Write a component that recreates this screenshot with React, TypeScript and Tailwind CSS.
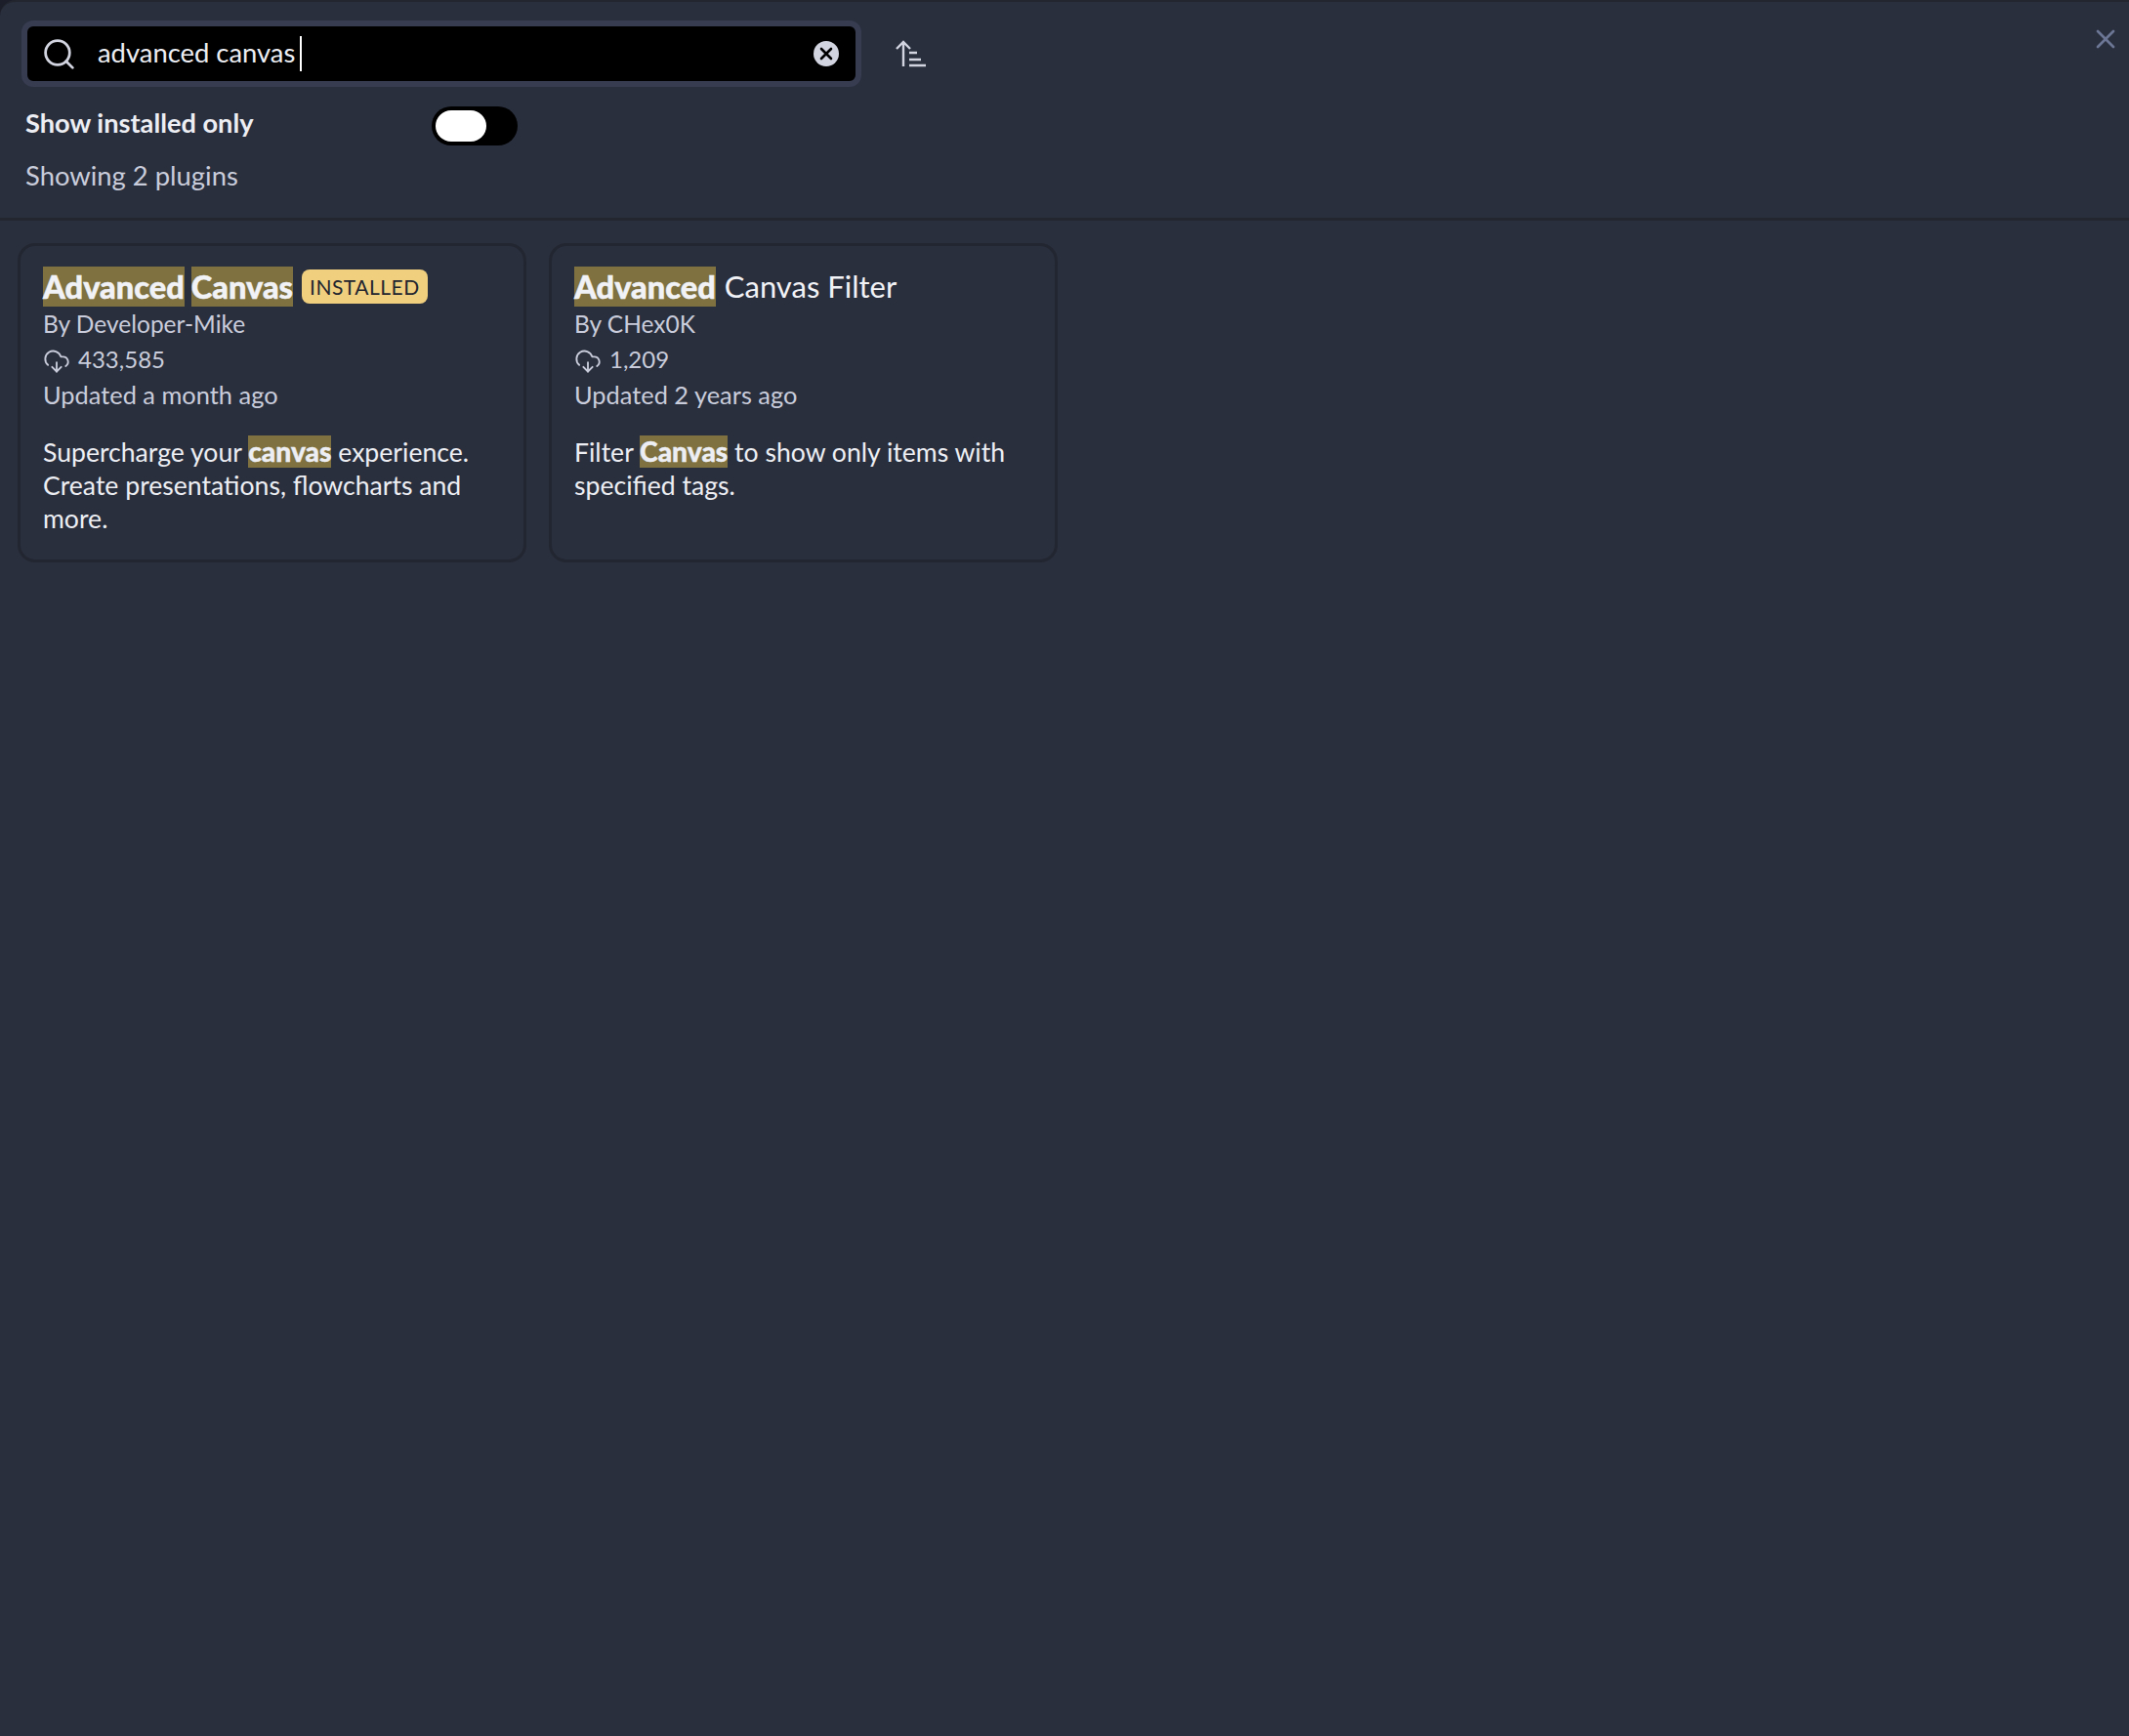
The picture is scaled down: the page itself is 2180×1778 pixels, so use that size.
import { CloudDownload, Search, X } from "lucide-react";
import { ReactNode } from "react";

const Mark = ({ children, big }: { children: ReactNode; big?: boolean }) => (
  <span
    className={
      big
        ? "inline-block bg-[#7f7140] text-[32.6px] font-black leading-[41px] [-webkit-text-stroke:0.5px_#f1f2f6]"
        : "inline-block bg-[#7f7140] text-[28.2px] font-black leading-[33px] [-webkit-text-stroke:0.4px_#eceef3]"
    }
  >
    {children}
  </span>
);

function SortIcon() {
  return (
    <svg width="32" height="30" viewBox="0 0 32 30" fill="none" stroke="#d2d5e0" strokeWidth="2.4">
      <path d="M9 28V3M2 10l7-7 7 7" />
      <path d="M15 14h8M15 21h12M15 27h17" />
    </svg>
  );
}

function ClearIcon() {
  return (
    <svg width="26" height="26" viewBox="0 0 26 26">
      <circle cx="13" cy="13" r="13" fill="#d2d5e0" />
      <path d="M8 8l10 10M18 8L8 18" stroke="#000" strokeWidth="2.6" strokeLinecap="round" />
    </svg>
  );
}

interface CardProps {
  title: ReactNode;
  author: string;
  downloads: string;
  updated: string;
  description: ReactNode;
}

function PluginCard({ title, author, downloads, updated, description }: CardProps) {
  return (
    <div className="w-[521px] h-[327px] rounded-[18px] border-[3px] border-[#222630] bg-[#2a2f3e] pl-[23px] pr-[20px] pt-[21px]">
      <div className="flex items-center h-[41px] text-[31px] leading-[41px] text-[#f1f2f6]">{title}</div>
      <div className="text-[24.5px] leading-[36px] text-[#c9cddb]">By {author}</div>
      <div className="flex items-center h-[36px] text-[24px] text-[#c9cddb]">
        <CloudDownload size={28} strokeWidth={1.6} className="mr-[8px] mt-[3px]" />
        {downloads}
      </div>
      <div className="text-[25.4px] leading-[36px] text-[#c9cddb]">{updated}</div>
      <p className="mt-[24px] text-[26.6px] leading-[34px] text-[#eceef3]">{description}</p>
    </div>
  );
}

export default function App() {
  return (
    <div className="relative min-h-[1778px] w-[2180px] bg-[#1c1f29] font-['Lato',sans-serif]">
      <div className="relative min-h-[1778px] rounded-tl-[16px] border-t-[2px] border-[#23262f] bg-[#2a2f3e]">
        <div className="h-[224px] border-b-[3px] border-[#23262f] pl-[22px] pt-[19px]">
          <div className="flex items-center">
            <div className="h-[68px] w-[860px] rounded-[12px] border-[6px] border-[#373c51] bg-black">
              <div className="flex h-full items-center pl-[14px] pr-[17px] text-[27.4px] text-[#eceef3]">
                <Search size={37} strokeWidth={1.8} className="mr-[21px] text-[#d2d5e0]" />
                <span className="mb-[2px]">advanced canvas</span>
                <span className="ml-[5px] h-[36px] w-[2px] bg-white" />
                <span className="ml-auto flex">
                  <ClearIcon />
                </span>
              </div>
            </div>
            <div className="ml-[34px] flex">
              <SortIcon />
            </div>
          </div>
          <div className="mt-[19px] flex h-[42px] items-center pl-[4px]">
            <span className="mb-[5px] w-[416px] text-[27.2px] font-bold text-[#eceef3]">Show installed only</span>
            <div className="h-[40px] w-[88px] rounded-full bg-black p-[4px]">
              <div className="h-[32px] w-[52px] rounded-full bg-white" />
            </div>
          </div>
          <div className="mt-[12px] pl-[4px] text-[27.4px] leading-[36px] text-[#c9cddb]">Showing 2 plugins</div>
        </div>
        <div className="flex gap-[23px] pl-[18px] pt-[23px]">
          <PluginCard
            title={
              <>
                <Mark big>Advanced</Mark>
                <span className="w-[7px]" />
                <Mark big>Canvas</Mark>
                <span className="ml-[9px] flex h-[35px] items-center rounded-[8px] bg-[#f0cf7f] px-[8px] text-[21px] tracking-[0.5px] text-[#23262f]">
                  INSTALLED
                </span>
              </>
            }
            author="Developer-Mike"
            downloads="433,585"
            updated="Updated a month ago"
            description={
              <>
                Supercharge your <Mark>canvas</Mark> experience. Create presentations, flowcharts and more.
              </>
            }
          />
          <PluginCard
            title={
              <>
                <Mark big>Advanced</Mark>
                <span className="ml-[9px]">Canvas Filter</span>
              </>
            }
            author="CHex0K"
            downloads="1,209"
            updated="Updated 2 years ago"
            description={
              <>
                Filter <Mark>Canvas</Mark> to show only items with specified tags.
              </>
            }
          />
        </div>
        <X size={32} strokeWidth={2} className="absolute right-[8px] top-[22px] text-[#6b7594]" />
      </div>
    </div>
  );
}
